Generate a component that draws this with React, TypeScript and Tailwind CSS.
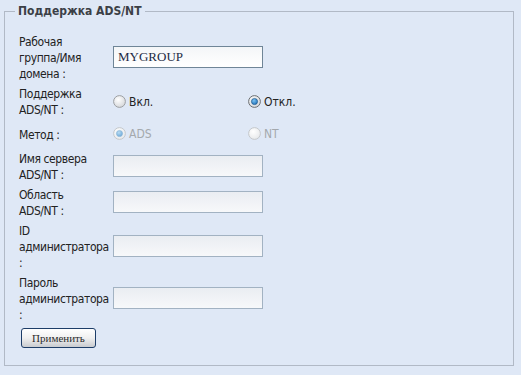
import React from "react";

const FONT = { fontFamily: '"DejaVu Sans Condensed", "DejaVu Sans", sans-serif' };

function Radio({ checked, disabled }: { checked?: boolean; disabled?: boolean }) {
  const id = React.useId().replace(/:/g, "");
  const ring = disabled ? "#c4c8cc" : checked ? "#6c6f73" : "#9c9fa3";
  const dot = disabled ? "#6aa7d6" : "#1c6fb8";
  return (
    <svg width="13" height="13" viewBox="0 0 13 13" className="shrink-0">
      <defs>
        <radialGradient id={"g" + id} cx="40%" cy="35%" r="70%">
          <stop offset="0%" stopColor="#ffffff" />
          <stop offset="100%" stopColor={disabled ? "#e6e8ea" : "#d4d6d9"} />
        </radialGradient>
        <radialGradient id={"d" + id} cx="40%" cy="35%" r="70%">
          <stop offset="0%" stopColor={disabled ? "#b9dcf4" : "#7cc2f2"} />
          <stop offset="100%" stopColor={dot} />
        </radialGradient>
      </defs>
      <circle cx="6.5" cy="6.5" r="5.9" fill={`url(#g${id})`} stroke={ring} strokeWidth="1" />
      {checked && <circle cx="6.5" cy="6.5" r="3.1" fill={`url(#d${id})`} stroke={disabled ? "#8fb7d6" : "#1a4f80"} strokeWidth="0.6" />}
    </svg>
  );
}

function Label({ children }: { children: React.ReactNode }) {
  return <div className="w-[94px] shrink-0 leading-[16px] text-[12px] tracking-[-0.4px] text-[#222]">{children}</div>;
}

function Input({ value }: { value?: string }) {
  return (
    <div
      className={
        "w-[150px] h-[22px] mb-[3px] border flex items-center pl-[4px] text-[13px] " +
        (value
          ? "border-[#6f8597] bg-gradient-to-b from-[#f4f6f8] to-[#ffffff]"
          : "border-[#a2b2c2] bg-gradient-to-b from-[#eaedf2] to-[#f7f8fa]")
      }
      style={{ fontFamily: '"Liberation Serif", serif', color: "#1d2a45" }}
    >
      {value}
    </div>
  );
}

export default function App() {
  return (
    <div className="w-[521px] h-[375px] bg-[#dfe8f6] pt-[3px] pl-[4px]" style={FONT}>
      <fieldset className="w-[510px] h-[363px] border border-[#b1b9c6] p-0 m-0">
        <legend className="ml-[10px] px-[3px] text-[12px] leading-[16px] font-bold text-[#3b3f46]">
          Поддержка ADS/NT
        </legend>
        <div className="pl-[14px] pt-[15px] flex flex-col gap-[4px]">
          <div className="flex items-center">
            <Label>
              Рабочая
              <br />
              группа/Имя
              <br />
              домена :
            </Label>
            <Input value="MYGROUP" />
          </div>
          <div className="flex items-center">
            <Label>
              Поддержка
              <br />
              ADS/NT :
            </Label>
            <div className="flex items-center mb-[1px]">
              <div className="w-[135px] flex items-center gap-[3px] text-[12px] text-[#222]">
                <Radio /> <span>Вкл.</span>
              </div>
              <div className="flex items-center gap-[3px] text-[12px] text-[#222]">
                <Radio checked /> <span>Откл.</span>
              </div>
            </div>
          </div>
          <div className="flex items-center h-[25px]">
            <Label>Метод :</Label>
            <div className="flex items-center mb-[2px]">
              <div className="w-[135px] flex items-center gap-[3px] text-[12px] text-[#a4a8ad]">
                <Radio checked disabled /> <span>ADS</span>
              </div>
              <div className="flex items-center gap-[3px] text-[12px] text-[#a4a8ad]">
                <Radio disabled /> <span>NT</span>
              </div>
            </div>
          </div>
          <div className="flex items-center">
            <Label>
              Имя сервера
              <br />
              ADS/NT :
            </Label>
            <Input />
          </div>
          <div className="flex items-center">
            <Label>
              Область
              <br />
              ADS/NT :
            </Label>
            <Input />
          </div>
          <div className="flex items-center">
            <Label>
              ID
              <br />
              администратора
              <br />:
            </Label>
            <Input />
          </div>
          <div className="flex items-center">
            <Label>
              Пароль
              <br />
              администратора
              <br />:
            </Label>
            <Input />
          </div>
          <div className="pt-[1px] pl-[2px]">
            <button
              className="w-[75px] h-[20px] rounded-[3px] border border-[#1d3d68] bg-gradient-to-b from-[#ffffff] via-[#f0f0f0] to-[#c9cbcf] text-[11px] text-[#2a2a2a] flex items-center justify-center"
              style={{ fontFamily: '"Liberation Serif", serif' }}
            >
              Применить
            </button>
          </div>
        </div>
      </fieldset>
    </div>
  );
}
